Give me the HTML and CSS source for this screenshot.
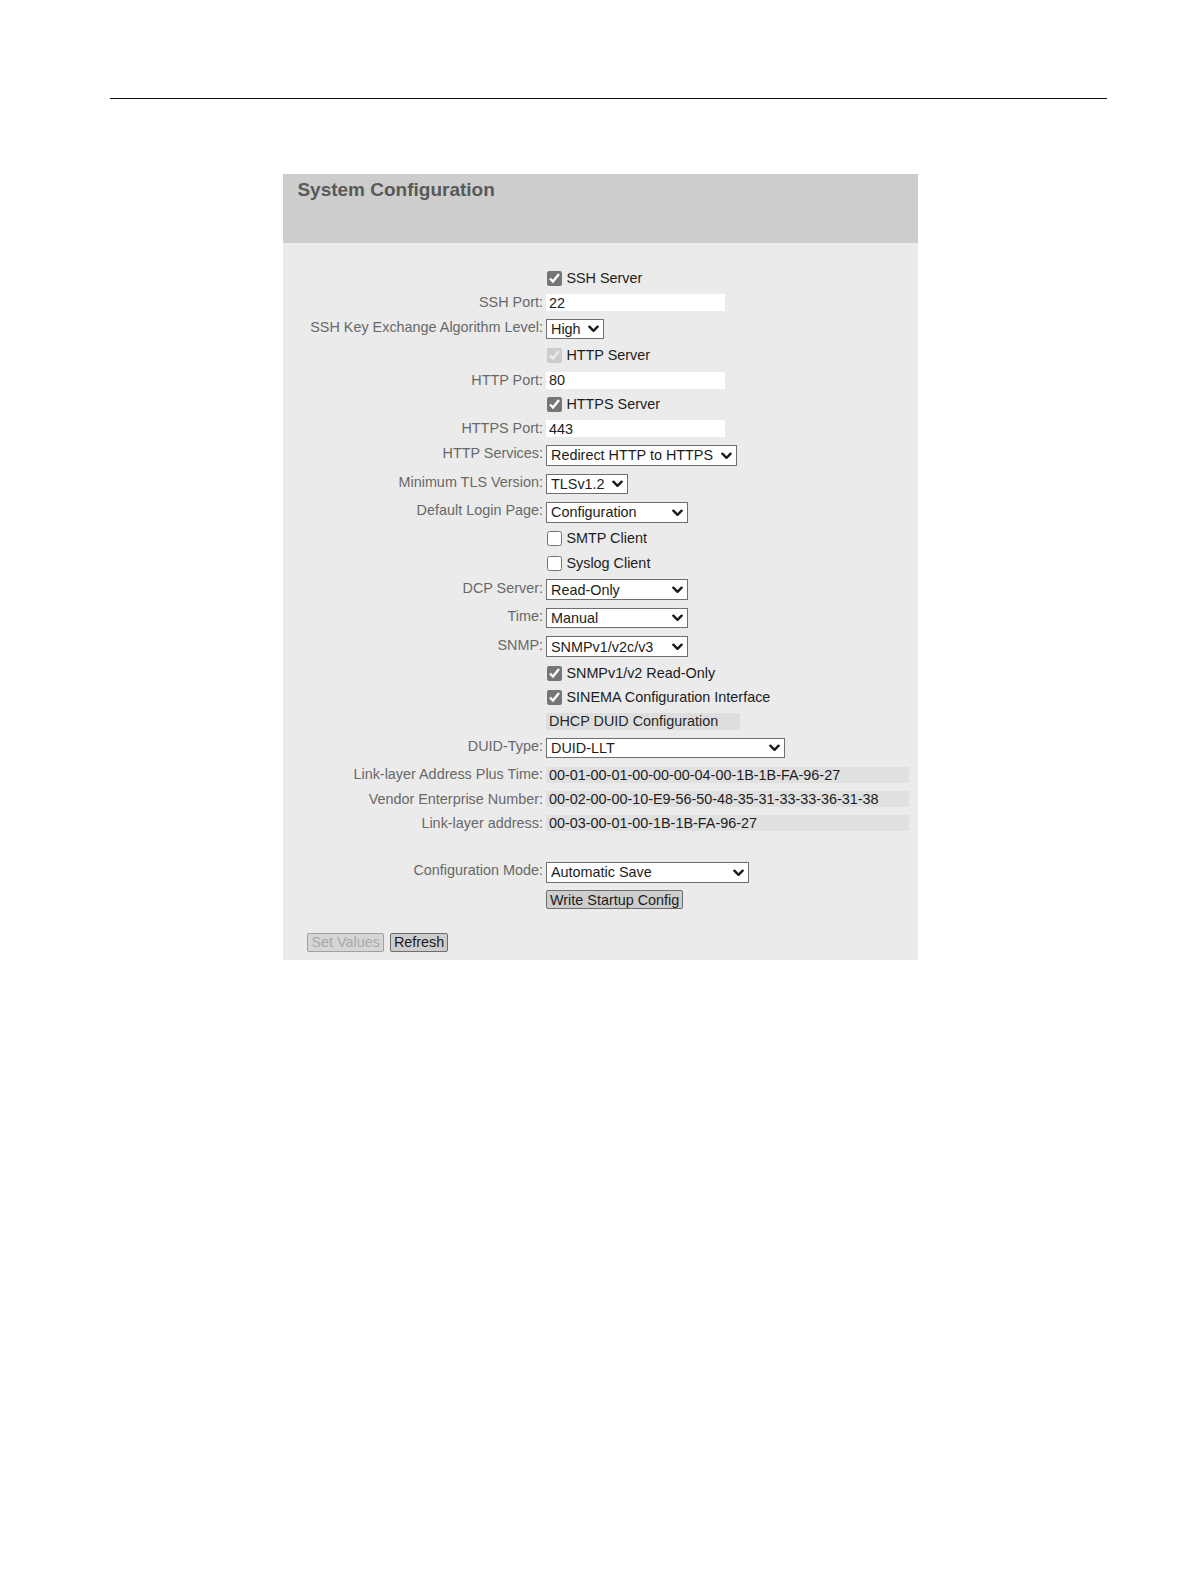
FILE: index.html
```html
<!DOCTYPE html>
<html>
<head>
<meta charset="utf-8">
<title>System Configuration</title>
<link rel="stylesheet" href="styles.css">
</head>
<body>
<div class="rule"></div>
<div class="panel">
  <div class="panel-head"><h1 class="title">System Configuration</h1></div>
  <form class="panel-body">
    <div class="row"><span class="lbl"></span><label class="chk"><input type="checkbox" checked> SSH Server</label></div>
    <div class="row"><span class="lbl">SSH Port:</span><input class="txt" type="text" value="22"></div>
    <div class="row sel-row"><span class="lbl">SSH Key Exchange Algorithm Level:</span><span class="select w-high"><select><option>High</option></select><svg class="chev" viewBox="0 0 12 8" width="11" height="8"><path d="M1.5 1.5 L6 6 L10.5 1.5"/></svg></span></div>
    <div class="row"><span class="lbl"></span><label class="chk"><input type="checkbox" checked disabled> HTTP Server</label></div>
    <div class="row"><span class="lbl">HTTP Port:</span><input class="txt" type="text" value="80"></div>
    <div class="row"><span class="lbl"></span><label class="chk"><input type="checkbox" checked> HTTPS Server</label></div>
    <div class="row"><span class="lbl">HTTPS Port:</span><input class="txt" type="text" value="443"></div>
    <div class="row sel-row"><span class="lbl">HTTP Services:</span><span class="select w-redirect"><select><option>Redirect HTTP to HTTPS</option></select><svg class="chev" viewBox="0 0 12 8" width="11" height="8"><path d="M1.5 1.5 L6 6 L10.5 1.5"/></svg></span></div>
    <div class="row sel-row"><span class="lbl">Minimum TLS Version:</span><span class="select w-tls"><select><option>TLSv1.2</option></select><svg class="chev" viewBox="0 0 12 8" width="11" height="8"><path d="M1.5 1.5 L6 6 L10.5 1.5"/></svg></span></div>
    <div class="row sel-row"><span class="lbl">Default Login Page:</span><span class="select w-140"><select><option>Configuration</option></select><svg class="chev" viewBox="0 0 12 8" width="11" height="8"><path d="M1.5 1.5 L6 6 L10.5 1.5"/></svg></span></div>
    <div class="row"><span class="lbl"></span><label class="chk"><input type="checkbox"> SMTP Client</label></div>
    <div class="row"><span class="lbl"></span><label class="chk"><input type="checkbox"> Syslog Client</label></div>
    <div class="row sel-row"><span class="lbl">DCP Server:</span><span class="select w-140"><select><option>Read-Only</option></select><svg class="chev" viewBox="0 0 12 8" width="11" height="8"><path d="M1.5 1.5 L6 6 L10.5 1.5"/></svg></span></div>
    <div class="row sel-row"><span class="lbl">Time:</span><span class="select w-140"><select><option>Manual</option></select><svg class="chev" viewBox="0 0 12 8" width="11" height="8"><path d="M1.5 1.5 L6 6 L10.5 1.5"/></svg></span></div>
    <div class="row sel-row"><span class="lbl">SNMP:</span><span class="select w-140"><select><option>SNMPv1/v2c/v3</option></select><svg class="chev" viewBox="0 0 12 8" width="11" height="8"><path d="M1.5 1.5 L6 6 L10.5 1.5"/></svg></span></div>
    <div class="row"><span class="lbl"></span><label class="chk"><input type="checkbox" checked> SNMPv1/v2 Read-Only</label></div>
    <div class="row"><span class="lbl"></span><label class="chk"><input type="checkbox" checked> SINEMA Configuration Interface</label></div>
    <div class="row"><span class="lbl"></span><span class="section">DHCP DUID Configuration</span></div>
    <div class="row sel-row"><span class="lbl">DUID-Type:</span><span class="select w-duid"><select><option>DUID-LLT</option></select><svg class="chev" viewBox="0 0 12 8" width="11" height="8"><path d="M1.5 1.5 L6 6 L10.5 1.5"/></svg></span></div>
    <div class="row"><span class="lbl">Link-layer Address Plus Time:</span><span class="ro">00-01-00-01-00-00-00-04-00-1B-1B-FA-96-27</span></div>
    <div class="row"><span class="lbl">Vendor Enterprise Number:</span><span class="ro">00-02-00-00-10-E9-56-50-48-35-31-33-33-36-31-38</span></div>
    <div class="row"><span class="lbl">Link-layer address:</span><span class="ro">00-03-00-01-00-1B-1B-FA-96-27</span></div>
    <div class="spacer"></div>
    <div class="row sel-row"><span class="lbl">Configuration Mode:</span><span class="select w-mode"><select><option>Automatic Save</option></select><svg class="chev" viewBox="0 0 12 8" width="11" height="8"><path d="M1.5 1.5 L6 6 L10.5 1.5"/></svg></span></div>
    <div class="row btn-row"><span class="lbl"></span><span><button type="button" class="btn">Write Startup Config</button></span></div>
    <div class="actions">
      <button type="button" class="btn" disabled>Set Values</button>
      <button type="button" class="btn">Refresh</button>
    </div>
  </form>
</div>
</body>
</html>
```

FILE: styles.css
```css
html, body {
  margin: 0;
  padding: 0;
  background: #ffffff;
}
body {
  font-family: "Liberation Sans", Arial, sans-serif;
  font-size: 14.4px;
  color: #1c1c1c;
}
.rule {
  margin: 98px 0 0 110px;
  width: 997px;
  height: 0;
  border-top: 1px solid #111;
}
.panel {
  margin: 75px 0 0 283px;
  width: 635px;
  background: #ebebeb;
}
.panel-head {
  height: 68.7px;
  background: #cdcdcd;
  padding: 5px 0 0 14.4px;
  box-sizing: border-box;
}
.title {
  margin: 0;
  font-size: 19px;
  line-height: 21px;
  font-weight: bold;
  color: #595959;
}
.panel-body {
  padding: 23.5px 9px 8.6px 0;
  margin: 0;
}
.row {
  display: grid;
  grid-template-columns: 260px 1fr;
  column-gap: 3px;
  align-items: center;
  height: 24.4px;
}
.sel-row {
  height: 28.5px;
}
.btn-row {
  height: 26px;
}
.lbl {
  text-align: right;
  color: #686868;
  line-height: 17px;
  white-space: nowrap;
}
.sel-row .lbl {
  padding-bottom: 3px;
}
.chk {
  display: flex;
  align-items: center;
  color: #1c1c1c;
  line-height: 17px;
  margin-left: 1px;
}
.chk input {
  width: 15px;
  height: 15px;
  margin: 0 4.4px 0 0;
  accent-color: #767676;
}
.txt {
  width: 179px;
  height: 17px;
  box-sizing: border-box;
  border: none;
  padding: 0 3px;
  margin: 0;
  background: #ffffff;
  font: 14.4px "Liberation Sans", Arial, sans-serif;
  color: #1c1c1c;
  outline: none;
}
.select {
  position: relative;
  display: block;
  height: 20.5px;
}
.select select {
  -webkit-appearance: none;
  appearance: none;
  display: block;
  width: 100%;
  height: 100%;
  box-sizing: border-box;
  margin: 0;
  border: 1px solid #6f6f6f;
  border-radius: 0;
  background: #ffffff;
  padding: 0 0 0 4px;
  font: 14.4px "Liberation Sans", Arial, sans-serif;
  color: #1c1c1c;
}
.chev {
  position: absolute;
  right: 5px;
  top: 6.5px;
  fill: none;
  stroke: #1a1a1a;
  stroke-width: 2.6;
  stroke-linecap: round;
  stroke-linejoin: round;
  pointer-events: none;
}
.w-high { width: 58px; }
.w-redirect { width: 191px; }
.w-tls { width: 82px; }
.w-140 { width: 142px; }
.w-duid { width: 239px; }
.w-mode { width: 203px; }
.section {
  display: block;
  width: 194px;
  height: 17px;
  line-height: 17px;
  background: #dedede;
  padding-left: 3px;
  box-sizing: border-box;
  color: #262626;
  white-space: nowrap;
}
.ro {
  display: block;
  height: 16px;
  line-height: 16px;
  background: #e0e0e0;
  padding-left: 3px;
  color: #1c1c1c;
  white-space: nowrap;
}
.spacer {
  height: 22.5px;
}
.btn {
  height: 19px;
  box-sizing: border-box;
  margin: 0;
  padding: 0 3px;
  border: 1px solid #6e6e6e;
  border-radius: 2px;
  background: #cdcdcd;
  font: 14.4px "Liberation Sans", Arial, sans-serif;
  line-height: 16px;
  color: #1c1c1c;
  white-space: nowrap;
}
.btn:disabled {
  color: #a9a9a9;
  border-color: #a0a0a0;
  background: #d6d6d6;
}
.actions {
  display: flex;
  gap: 6px;
  margin: 20px 0 0 24.4px;
}
```
